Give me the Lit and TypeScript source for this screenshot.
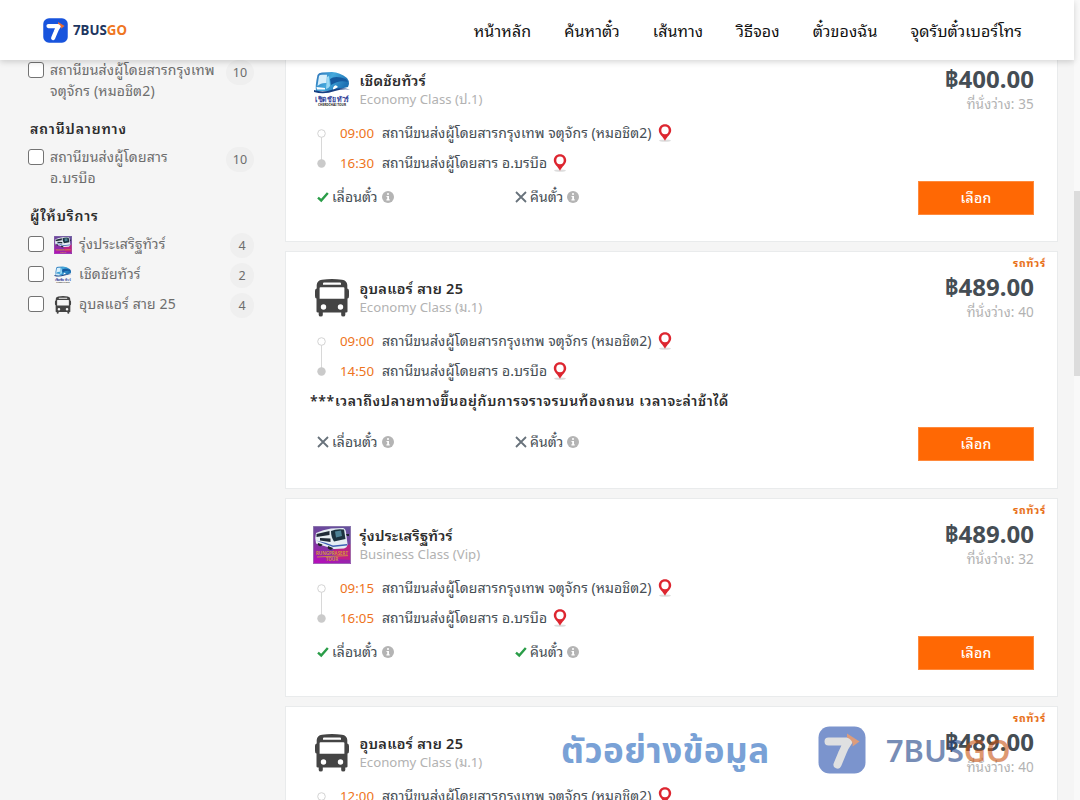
import { LitElement, html, css, svg, nothing } from "lit";
import { customElement, property } from "lit/decorators.js";

type Operator = "bus" | "chai" | "rung";

interface Trip {
  operator: Operator;
  name: string;
  cls: string;
  depart: string;
  arrive: string;
  price: string;
  seats: number;
  note?: string;
  change: boolean;
  refund: boolean;
}

const ORIGIN = "สถานีขนส่งผู้โดยสารกรุงเทพ จตุจักร (หมอชิต2)";
const DEST = "สถานีขนส่งผู้โดยสาร อ.บรบือ";

const TRIPS: Trip[] = [
  { operator: "chai", name: "เชิดชัยทัวร์", cls: "Economy Class (ป.1)", depart: "09:00", arrive: "16:30", price: "฿400.00", seats: 35, change: true, refund: false },
  { operator: "bus", name: "อุบลแอร์ สาย 25", cls: "Economy Class (ม.1)", depart: "09:00", arrive: "14:50", price: "฿489.00", seats: 40, note: "***เวลาถึงปลายทางขึ้นอยุ่กับการจราจรบนท้องถนน เวลาจะล่าช้าได้", change: false, refund: false },
  { operator: "rung", name: "รุ่งประเสริฐทัวร์", cls: "Business Class (Vip)", depart: "09:15", arrive: "16:05", price: "฿489.00", seats: 32, change: true, refund: true },
  { operator: "bus", name: "อุบลแอร์ สาย 25", cls: "Economy Class (ม.1)", depart: "12:00", arrive: "17:50", price: "฿489.00", seats: 40, change: false, refund: false },
];

@customElement("operator-logo")
export class OperatorLogo extends LitElement {
  @property() kind: Operator = "bus";

  static styles = css`
    :host { display: block; flex: none; }
    svg { display: block; width: 100%; height: 100%; }
  `;

  render() {
    const art = {
      bus: svg`
        <path fill="#444" fill-rule="evenodd" d="M9 .8Q19 -.8 29 .8Q34 1.5 34.3 6V9.5Q36 9.5 36 12V17Q36 19.5 34.5 19.500V32.500Q34.500 33.600 33 33.600H32.300V36Q32.300 37.600 30.200 37.600Q28.200 37.600 28.200 36V33.600H9.800V36Q9.800 37.600 7.800 37.600Q5.700 37.600 5.700 36V33.600H5Q3.500 33.600 3.500 32.500V19.500Q2 19.500 2 17V12Q2 9.500 3.700 9.500V6Q4 1.500 9 .8ZM11 3.600Q10 3.600 10 4.600V5.800H28V4.600Q28 3.600 27 3.600ZM7.500 8.200Q6.600 8.200 6.600 9V19.800H31.400V9Q31.400 8.200 30.500 8.200ZM10.500 25.300A2.700 2.700 0 1 0 10.500 30.700A2.700 2.700 0 1 0 10.500 25.300ZM27.500 25.300A2.700 2.700 0 1 0 27.500 30.700A2.700 2.700 0 1 0 27.500 25.300Z"/>`,
      chai: svg`
        <defs><linearGradient id="b" x1="0" y1="0" x2="1" y2=".4"><stop offset="0" stop-color="#2c6fb5"/><stop offset=".5" stop-color="#45a9dc"/><stop offset="1" stop-color="#1e72b4"/></linearGradient></defs>
        <path fill="url(#b)" d="M4.500 4Q5.500 1.500 9 1.400L19 1Q27 1.500 34 7Q36.500 10 36 13L35 16L18 20H3Q2 15 4.500 4Z"/>
        <path fill="#d7effb" d="M6 5Q6.500 3.800 9 3.800H14L13.500 12Q8 11.500 4.500 15Z"/>
        <path fill="#165a9f" d="M17 8Q22 4 33 8L35 11Q26 8.500 18 14Z"/>
        <path fill="#9bd8f3" d="M16 5L17 15Q15 18 13 18L14 6Z"/>
        <path fill="#fff" d="M3.500 16L12 17V18.500H4ZM20 17Q22 12 25 16L20 19Z"/>
        <path fill="#173f82" d="M1 19Q10 22 20 18.500Q28 16 37 18.500Q29 17.500 22 20Q11 24 1 21Z"/>
        <text x="19" y="31.300" text-anchor="middle" textLength="34" lengthAdjust="spacingAndGlyphs" font-family="Noto Sans, sans-serif" font-weight="700" font-size="7.500" fill="#34459b">เชิดชัย ทัวร์</text>
        <text x="19" y="35.400" text-anchor="middle" textLength="28" lengthAdjust="spacingAndGlyphs" font-family="Noto Sans, sans-serif" font-weight="700" font-size="3.300" fill="#222">CHERDCHAI TOUR</text>`,
      rung: svg`
        <defs><linearGradient id="r" x1=".6" y1="0" x2=".3" y2="1"><stop offset="0" stop-color="#65509c"/><stop offset=".55" stop-color="#7e38a0"/><stop offset="1" stop-color="#b40fb9"/></linearGradient></defs>
        <rect width="38" height="38" fill="url(#r)"/>
        <path fill="#d51a78" d="M20 24L38 18V34L24 33Z" opacity=".7"/>
        <path fill="#e6eef3" d="M3 7Q10 3.500 18 2.500L30 2Q32.500 2.500 33 6L34.500 18Q34.500 21.500 31 22.500L21 23L3 17.500Q1.500 12 3 7Z"/>
        <path fill="#202c38" d="M3.500 8L16.500 5V9L3.500 11ZM7 12L17.500 12.500V16L7 14.500Z"/>
        <path fill="#1c3340" d="M18 5Q23 2.500 31 3.500L32.500 13L21 15.500Q18 11 18 5Z"/>
        <path fill="#4d8295" d="M22 5.500L28 4.500L29 10L23 11.500Z"/>
        <path fill="#3d5fb5" d="M3 14.500Q13 16.500 20 19.500L34 18V19.500L20 21Z"/>
        <path fill="#20252b" d="M5 17A2.200 2.200 0 0 0 9.500 18.500ZM15 20A2.300 2.300 0 0 0 20 22Z"/>
        <path fill="#1c2530" d="M33 8H36V10H34Z"/>
        <text x="19" y="28.600" text-anchor="middle" textLength="32" lengthAdjust="spacingAndGlyphs" font-family="Noto Sans, sans-serif" font-weight="600" font-size="4.600" fill="#d9a030">RUNGPRASERT</text>
        <path d="M4 31L35 29.600" stroke="#d9a030" stroke-width=".8"/>
        <text x="19" y="35.400" text-anchor="middle" font-family="Noto Sans, sans-serif" font-weight="600" font-size="4.600" fill="#d9a030">TOUR</text>
        <rect x=".4" y=".4" width="37.200" height="37.200" fill="none" stroke="#9a86b5" stroke-width=".7"/>`,
    }[this.kind];
    return html`<svg viewBox="0 0 38 38">${art}</svg>`;
  }
}

@customElement("brand-mark")
export class BrandMark extends LitElement {
  static styles = css`
    :host { display: block; flex: none; }
    svg { display: block; width: 100%; height: 100%; }
    .tile { fill: var(--tile, #1854dd); }
    .tip { fill: var(--tip, #ef6c2e); }
    .seven { stroke: var(--seven, #fff); }
  `;
  render() {
    return html`<svg viewBox="0 0 48 48">
      <rect class="tile" x=".5" y=".5" width="47" height="47" rx="11"/>
      <path class="seven" d="M10.500 15.500H30.500Q26.500 21 24.500 26.500L19.500 38.500" fill="none" stroke-width="8" stroke-linecap="round" stroke-linejoin="round"/>
      <path class="tip" d="M29 7.500L41.500 15.500L34.500 20.500Q35.500 14 29 11.500Z"/>
    </svg>`;
  }
}

const pin = html`<svg class="pin" viewBox="0 0 14 18">
  <ellipse cx="7" cy="16.600" rx="6" ry="1.200" fill="#ddd"/>
  <path fill="#dd2630" fill-rule="evenodd" d="M7 .2C3.300 .2 .8 2.900 .8 6.300C.8 10.200 5 12.600 7 16.800C9 12.600 13.200 10.200 13.200 6.300C13.200 2.900 10.700 .2 7 .2ZM7 2.400A3.700 3.900 0 1 1 7 10.200A3.700 3.900 0 1 1 7 2.400Z"/>
</svg>`;

const check = html`<svg class="mark" viewBox="0 0 13 12"><path d="M1.500 6.700L4.700 9.500L11.300 2" fill="none" stroke="#2a9d48" stroke-width="2.400"/></svg>`;
const cross = html`<svg class="mark" viewBox="0 0 13 12"><path d="M1.500 1L11.500 11M11.500 1L1.500 11" fill="none" stroke="#68727b" stroke-width="1.800"/></svg>`;
const info = html`<svg class="info" viewBox="0 0 12 12"><circle cx="6" cy="6" r="6" fill="#b4b4b4"/><path d="M5 2.200H7V3.800H5ZM4.500 5H7V8.300H7.700V9.500H4.400V8.300H5.200V6.100H4.500Z" fill="#fff"/></svg>`;

@customElement("trip-card")
export class TripCard extends LitElement {
  @property({ attribute: false }) trip!: Trip;

  static styles = css`
    :host { display: block; flex: none; }
    .card { box-sizing: border-box; display: flex; justify-content: space-between; height: 199px; padding: 0 23px 0 24px; background: #fff; border: 1px solid #e9ebec; }
    .card.tall { height: 238px; }
    .left { flex: 1; padding-top: 27px; }
    .head { display: flex; gap: 8.500px; padding-left: 3px; height: 47px; }
    operator-logo { width: 38px; height: 38px; }
    .name { font-size: 14.500px; font-weight: 600; line-height: 19px; letter-spacing: .25px; color: #2c2c2c; white-space: nowrap; }
    .cls { font-size: 13.200px; line-height: 19px; color: #b2b2b2; white-space: nowrap; }
    .route { display: flex; padding-left: 7px; }
    .track { width: 9px; height: 40px; margin: 11px 14px 0 0; }
    .stop { display: flex; align-items: center; height: 30px; white-space: nowrap; font-size: 14px; letter-spacing: .07px; color: #454d54; }
    .place { padding-bottom: 3px; }
    .time { width: 42px; font-size: 13.300px; letter-spacing: 0; color: #ee7421; }
    .pin { width: 14px; height: 18px; flex: none; margin-left: 6px; }
    .note { height: 30px; line-height: 30px; font-size: 14px; letter-spacing: .65px; font-weight: 600; color: #2c2c2c; white-space: nowrap; }
    .terms { display: flex; padding-left: 6px; height: 38px; }
    .tall .terms { padding-top: 7px; }
    .term { display: flex; align-items: center; width: 198px; font-size: 14px; letter-spacing: .1px; color: #454d54; white-space: nowrap; }
    .label { padding-bottom: 3px; }
    .mark { width: 14px; height: 12px; margin-right: 2px; }
    .info { width: 12px; height: 12px; margin-left: 4px; }
    .right { display: flex; flex-direction: column; align-items: flex-end; width: 140px; }
    .kind { height: 18px; margin-right: -12px; padding-top: 4px; box-sizing: border-box; font-size: 10.500px; letter-spacing: .7px; line-height: 14px; font-weight: 700; color: #e87017; }
    .price { font-size: 24px; font-weight: 700; line-height: 33px; color: #454d54; }
    .seats { font-size: 13.500px; letter-spacing: .15px; line-height: 19px; color: #b2b2b2; }
    .pick { box-sizing: border-box; width: 116px; height: 34px; margin-top: 67px; border: 1px solid #ff8a3d; border-radius: 0; background: #ff6804; color: #fff; font: 500 14px/32px "Noto Sans", "Noto Sans Thai Looped", "Leelawadee UI", Tahoma, Loma, Waree, "Noto Sans Thai", sans-serif; letter-spacing: .2px; padding: 0; }
    .tall .pick { margin-top: 105px; }
  `;

  private term(ok: boolean, label: string) {
    return html`<div class="term">${ok ? check : cross}<span class="label">${label}</span>${info}</div>`;
  }

  render() {
    const t = this.trip;
    return html`<article class="card ${t.note ? "tall" : ""}">
      <div class="left">
        <div class="head">
          <operator-logo .kind=${t.operator}></operator-logo>
          <div><div class="name">${t.name}</div><div class="cls">${t.cls}</div></div>
        </div>
        <div class="route">
          <svg class="track" viewBox="0 0 9 40"><path d="M4.500 8V32" stroke="#d8d8d8"/><circle cx="4.500" cy="4.500" r="3.800" fill="#fff" stroke="#d3d3d3"/><circle cx="4.500" cy="34.500" r="4.200" fill="#cacaca"/></svg>
          <div>
            <div class="stop"><span class="time">${t.depart}</span><span class="place">${ORIGIN}</span>${pin}</div>
            <div class="stop"><span class="time">${t.arrive}</span><span class="place">${DEST}</span>${pin}</div>
          </div>
        </div>
        ${t.note ? html`<div class="note">${t.note}</div>` : nothing}
        <div class="terms">${this.term(t.change, "เลื่อนตั๋ว")}${this.term(t.refund, "คืนตั๋ว")}</div>
      </div>
      <div class="right">
        <div class="kind">รถทัวร์</div>
        <div class="price">${t.price}</div>
        <div class="seats">ที่นั่งว่าง: ${t.seats}</div>
        <button class="pick">เลือก</button>
      </div>
    </article>`;
  }
}

@customElement("app-root")
export class AppRoot extends LitElement {
  static styles = css`
    :host { display: block; font-family: "Noto Sans", "Noto Sans Thai Looped", "Leelawadee UI", Tahoma, Loma, Waree, "Noto Sans Thai", sans-serif; }
    .window { display: flex; width: 1080px; height: 800px; overflow: hidden; background: #f5f5f5; }
    .page { display: flex; flex-direction: column; width: 1074px; }
    .top { position: relative; z-index: 2; box-sizing: border-box; display: flex; align-items: center; height: 60px; flex: none; padding: 0 52px 0 43px; background: #fff; box-shadow: 0 2px 6px rgba(0,0,0,.16); }
    .logo { display: flex; align-items: center; gap: 5px; font: 700 13.300px/20px "Noto Sans", sans-serif; color: #1d365f; }
    .logo brand-mark { width: 25px; height: 25px; }
    .go { color: #ef7622; }
    .menu { display: flex; gap: 33px; margin-left: auto; padding-bottom: 1px; font-size: 16px; letter-spacing: .1px; color: #111; white-space: nowrap; }
    .body { display: flex; flex: 1; min-height: 0; overflow: hidden; }
    .filters { box-sizing: border-box; width: 285px; flex: none; padding: 0 31px 0 28px; color: #6d6d6d; font-size: 14px; letter-spacing: .18px; }
    .option { display: flex; align-items: flex-start; }
    .box { box-sizing: border-box; width: 16px; height: 16px; flex: none; margin: 2px 6px 0 0; border: 1.500px solid #737373; border-radius: 3px; background: #fff; }
    .place { line-height: 21px; height: 49px; margin-top: -1px; flex: 1; white-space: nowrap; }
    .count { box-sizing: border-box; display: grid; place-items: center; min-width: 24px; height: 25px; padding: 0 6px; border-radius: 13px; background: #efefef; line-height: 18px; font-size: 12.500px; letter-spacing: 0; }
    .place + .count { min-width: 28px; }
    .heading { height: 29px; padding: 10px 0 0 2px; line-height: 22px; font-weight: 600; letter-spacing: .9px; color: #2c2c2c; }
    .carrier { height: 30px; }
    .carrier operator-logo { width: 18px; height: 18px; margin: 2px 7px 0 4px; }
    .carrier .label { flex: 1; line-height: 20px; white-space: nowrap; }
    .carrier .count { margin-top: -1px; }
    .results { display: flex; flex-direction: column; gap: 9px; width: 773px; margin-top: -17px; }
    .scroll { width: 6px; padding-top: 191px; box-sizing: border-box; background: #f9f9f9; }
    .thumb { height: 185px; background: #dcdcdc; }
    .sample { position: absolute; left: 561px; top: 720px; z-index: 3; display: flex; align-items: center; height: 60px; white-space: nowrap; pointer-events: none; }
    .sample .words { width: 257px; font-family: "Noto Sans", "Noto Sans Thai", sans-serif; font-size: 35px; letter-spacing: .5px; line-height: 60px; font-weight: 700; color: #79a1d6; }
    .sample brand-mark { width: 48px; height: 48px; --tile: #7b94cd; --tip: #dc9c7c; --seven: #dfe0e1; }
    .sample .brand { margin-left: 20px; font: 600 30.800px/56px "Noto Sans", sans-serif; color: #1d4287; opacity: .6; }
    .sample .brand span { color: #c95413; }
  `;

  private carrier(kind: Operator, label: string, n: number) {
    return html`<div class="option carrier"><span class="box"></span><operator-logo .kind=${kind}></operator-logo><span class="label">${label}</span><span class="count">${n}</span></div>`;
  }

  render() {
    return html`<div class="window">
      <div class="page">
        <header class="top">
          <div class="logo"><brand-mark></brand-mark><span>7BUS<span class="go">GO</span></span></div>
          <nav class="menu">${["หน้าหลัก", "ค้นหาตั๋ว", "เส้นทาง", "วิธีจอง", "ตั๋วของฉัน", "จุดรับตั๋วเบอร์โทร"].map((m) => html`<span>${m}</span>`)}</nav>
        </header>
        <div class="body">
          <aside class="filters">
            <div class="option"><span class="box"></span><span class="place">สถานีขนส่งผู้โดยสารกรุงเทพ<br>จตุจักร (หมอชิต2)</span><span class="count">10</span></div>
            <div class="heading">สถานีปลายทาง</div>
            <div class="option"><span class="box"></span><span class="place">สถานีขนส่งผู้โดยสาร<br>อ.บรบือ</span><span class="count">10</span></div>
            <div class="heading">ผู้ให้บริการ</div>
            ${this.carrier("rung", "รุ่งประเสริฐทัวร์", 4)}
            ${this.carrier("chai", "เชิดชัยทัวร์", 2)}
            ${this.carrier("bus", "อุบลแอร์ สาย 25", 4)}
          </aside>
          <main class="results">${TRIPS.map((t) => html`<trip-card .trip=${t}></trip-card>`)}</main>
        </div>
      </div>
      <div class="scroll"><div class="thumb"></div></div>
      <div class="sample"><span class="words">ตัวอย่างข้อมูล</span><brand-mark></brand-mark><span class="brand">7BUS<span>GO</span></span></div>
    </div>`;
  }
}
